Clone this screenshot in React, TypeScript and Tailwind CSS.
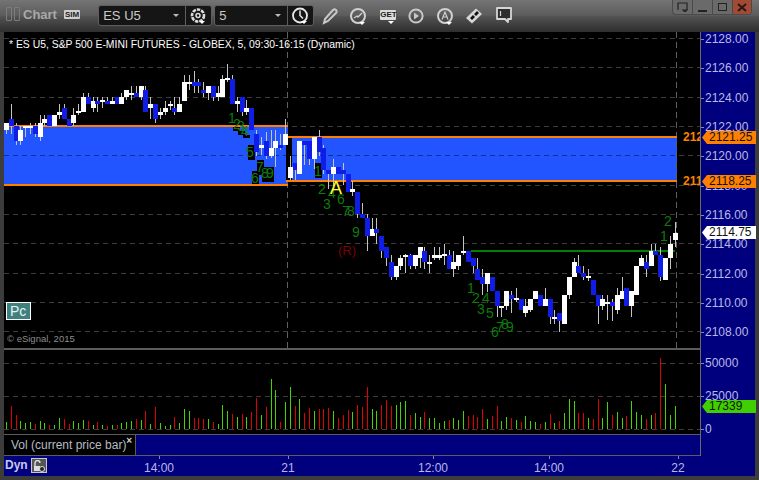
import React from 'react';

// [bodyTop, bodyBottom, wickTop, wickBottom, up]
type Candle = [number, number, number, number, number];

const candles: Candle[] = [
  [123, 130, 123, 134, 1], [119, 126, 104, 134, 0], [126, 141, 123, 145, 0], [130, 141, 126, 145, 1],
  [126, 128, 126, 137, 1], [126, 128, 123, 134, 1], [126, 134, 123, 137, 0], [123, 137, 115, 141, 1],
  [119, 123, 115, 126, 1], [115, 126, 115, 126, 0], [115, 126, 115, 126, 1], [112, 115, 104, 119, 1],
  [108, 119, 104, 119, 0], [119, 126, 119, 126, 0], [115, 123, 108, 126, 1], [111, 113, 104, 115, 1],
  [97, 112, 93, 112, 1], [97, 104, 93, 104, 0], [101, 108, 97, 112, 1], [101, 104, 97, 112, 0],
  [100, 102, 97, 108, 1], [101, 104, 97, 104, 0], [101, 104, 97, 104, 1], [97, 104, 97, 104, 0],
  [97, 104, 93, 104, 1], [90, 97, 90, 100, 1], [93, 95, 86, 100, 1], [93, 97, 86, 97, 0],
  [86, 97, 86, 100, 1], [90, 112, 86, 112, 0], [104, 108, 97, 119, 1], [104, 119, 104, 123, 0],
  [112, 115, 108, 119, 1], [108, 112, 101, 115, 1], [104, 106, 101, 110, 1], [108, 112, 97, 115, 0],
  [104, 112, 97, 112, 1], [82, 101, 75, 101, 1], [82, 84, 75, 90, 1], [82, 86, 71, 93, 0],
  [82, 86, 79, 93, 0], [90, 93, 82, 97, 0], [86, 93, 86, 100, 1], [86, 97, 86, 101, 0],
  [93, 97, 86, 101, 1], [79, 97, 75, 97, 1], [78, 80, 64, 82, 1], [79, 104, 75, 104, 0],
  [101, 104, 97, 112, 1], [97, 112, 97, 116, 0], [108, 112, 100, 115, 1], [108, 130, 108, 130, 0],
  [134, 152, 130, 156, 0], [145, 148, 137, 155, 1], [141, 156, 132, 159, 0], [148, 156, 130, 158, 1],
  [141, 148, 130, 167, 1], [145, 148, 134, 150, 0], [134, 145, 119, 145, 1], [167, 178, 156, 180, 1],
  [163, 170, 163, 180, 0], [141, 174, 141, 174, 1], [141, 145, 141, 165, 0], [141, 159, 141, 165, 0],
  [137, 159, 137, 169, 1], [137, 152, 130, 156, 0], [148, 170, 145, 174, 0], [170, 174, 170, 189, 0],
  [167, 174, 159, 186, 1], [167, 174, 167, 174, 0], [170, 174, 163, 185, 0], [174, 192, 174, 192, 0],
  [189, 192, 181, 196, 1], [192, 214, 192, 218, 0], [214, 218, 203, 218, 0], [218, 236, 214, 251, 0],
  [229, 236, 218, 236, 1], [229, 233, 218, 244, 0], [236, 251, 236, 258, 0], [247, 258, 247, 266, 0],
  [262, 277, 255, 280, 0], [266, 277, 266, 280, 1], [258, 266, 255, 270, 1], [255, 257, 254, 273, 1],
  [255, 266, 254, 269, 0], [255, 266, 255, 269, 1], [247, 258, 247, 268, 1], [251, 262, 247, 269, 0],
  [262, 264, 255, 273, 1], [255, 258, 247, 260, 1], [255, 258, 247, 260, 1], [254, 256, 244, 265, 1],
  [255, 269, 250, 269, 0], [262, 269, 251, 277, 1], [255, 266, 255, 270, 1], [251, 253, 236, 255, 1],
  [251, 262, 251, 262, 0], [258, 266, 258, 273, 0], [269, 280, 258, 280, 0], [277, 284, 269, 295, 0],
  [273, 284, 273, 292, 1], [277, 291, 277, 291, 0], [291, 306, 291, 317, 0], [306, 308, 306, 317, 1],
  [291, 306, 291, 310, 1], [295, 299, 291, 313, 0], [298, 300, 288, 302, 1], [299, 310, 299, 310, 0],
  [306, 313, 299, 317, 1], [299, 310, 299, 312, 1], [291, 299, 291, 299, 1], [295, 306, 295, 306, 0],
  [299, 306, 288, 306, 1], [299, 317, 299, 324, 0], [317, 319, 310, 324, 1], [313, 321, 313, 332, 0],
  [295, 324, 295, 324, 1], [277, 295, 277, 299, 1], [262, 277, 258, 277, 1], [266, 273, 255, 273, 0],
  [273, 277, 266, 280, 0], [276, 278, 269, 281, 1], [280, 295, 280, 295, 0], [295, 306, 295, 324, 0],
  [299, 306, 295, 310, 1], [302, 304, 295, 320, 1], [302, 306, 299, 321, 0], [295, 310, 288, 314, 1],
  [291, 299, 277, 299, 1], [288, 306, 288, 306, 0], [291, 306, 291, 317, 1], [266, 295, 266, 295, 1],
  [258, 266, 255, 266, 1], [262, 269, 255, 277, 0], [251, 266, 244, 266, 1], [251, 255, 244, 255, 0],
  [255, 277, 247, 281, 0], [258, 280, 258, 280, 1], [244, 258, 236, 269, 1], [233, 240, 222, 247, 1],
];

// bar height in px, r = down bar
const vols: [number, number][] = [
  [7, 0], [23, 1], [14, 1], [8, 0], [6, 0], [7, 0], [5, 1], [8, 0], [6, 0], [4, 1],
  [4, 0], [11, 0], [10, 1], [5, 1], [8, 0], [6, 0], [9, 0], [8, 1], [4, 0], [7, 1],
  [4, 0], [3, 1], [4, 0], [4, 1], [6, 0], [7, 0], [8, 0], [10, 1], [9, 0], [18, 1],
  [5, 0], [22, 1], [6, 0], [3, 0], [4, 0], [12, 1], [6, 0], [20, 0], [18, 0], [11, 1],
  [11, 1], [10, 1], [10, 0], [7, 1], [5, 0], [24, 0], [18, 0], [15, 1], [12, 0], [15, 1],
  [12, 0], [17, 1], [31, 1], [14, 0], [22, 1], [50, 0], [39, 0], [7, 1], [27, 0], [42, 0],
  [23, 1], [30, 0], [16, 1], [21, 1], [18, 0], [20, 1], [20, 1], [21, 1], [18, 0], [11, 1],
  [14, 1], [19, 1], [17, 0], [24, 1], [22, 1], [42, 1], [20, 0], [18, 0], [24, 1], [29, 1],
  [23, 1], [24, 0], [27, 0], [28, 0], [14, 1], [16, 0], [12, 0], [17, 1], [11, 0], [11, 0],
  [6, 0], [8, 0], [9, 1], [11, 0], [9, 0], [18, 0], [13, 1], [14, 1], [12, 1], [20, 1],
  [10, 0], [13, 1], [23, 1], [8, 0], [12, 0], [11, 1], [9, 0], [7, 1], [13, 0], [8, 0],
  [7, 0], [5, 1], [7, 0], [15, 1], [6, 0], [8, 1], [16, 0], [30, 0], [28, 0], [16, 1],
  [16, 1], [11, 0], [10, 1], [30, 1], [11, 0], [27, 0], [14, 1], [17, 0], [11, 0], [13, 1],
  [28, 0], [17, 0], [14, 0], [10, 1], [14, 0], [16, 1], [71, 1], [45, 0], [14, 0], [23, 0],
];

const priceGrid = [38, 67, 97, 126, 155, 185, 214, 243, 273, 302, 331];

const priceLabels: [string, number][] = [
  ['2128.00', 38], ['2126.00', 67], ['2124.00', 97], ['2122.00', 126], ['2120.00', 155], ['2118.00', 185],
  ['2116.00', 214], ['2114.00', 243], ['2112.00', 273], ['2110.00', 302], ['2108.00', 331],
];

const counts: [string, number, number][] = [
  ['1', 232, 123], ['2', 237, 129], ['3', 241, 131], ['4', 245, 136], ['5', 250, 157], ['6', 255, 183],
  ['7', 260, 172], ['8', 265, 178], ['9', 270, 178], ['1', 318, 176], ['2', 322, 194], ['3', 327, 209],
  ['4', 332, 198], ['6', 341, 204], ['7', 346, 216], ['8', 351, 216], ['9', 356, 237], ['1', 471, 293],
  ['2', 476, 303], ['4', 486, 303], ['3', 481, 314], ['5', 490, 318], ['6', 495, 337], ['7', 500, 332],
  ['8', 505, 329], ['9', 510, 332], ['1', 664, 241], ['2', 668, 226],
];

const xLabels: [string, number][] = [['14:00', 159], ['21', 288], ['12:00', 433], ['14:00', 549], ['22', 678]];

const cx = (i: number) => Math.round(6 + 4.81 * i);

function PriceTag({ text, top, bg }: { text: string; top: string; bg: string }) {
  return (
    <div className={`absolute left-px flex items-center ${top}`}>
      <svg width="5" height="13" viewBox="0 0 5 13">
        <path d="M0 6.5 5 0v13z" fill={bg} />
      </svg>
      <div className="h-[13px] w-[49px] pl-[2px] text-[12px] leading-[13px] text-[#101010]" style={{ background: bg }}>
        {text}
      </div>
    </div>
  );
}

function Caret({ x, y }: { x: number; y: number }) {
  return <path d={`M${x} ${y}h6l-3 3z`} fill="#fff" />;
}

function Toolbar() {
  return (
    <div className="relative flex h-8 shrink-0 items-start bg-[linear-gradient(#747474,#5c5c5c_48%,#525252_52%,#2e2e2e)] pl-[6px] pt-[5px]">
      <div className="mt-[2px] flex gap-[2px]">
        <div className="h-[14px] w-[6px] rounded-[1px] border border-[#7c7c7c]" />
        <div className="h-[14px] w-[6px] rounded-[1px] border border-[#7c7c7c]" />
      </div>
      <span className="ml-[3px] mt-[1px] text-[13px] font-bold leading-[17px] text-[#a8a8a8]">Chart</span>
      <span className="ml-[7px] mt-[5px] h-[9px] rounded-[1px] bg-[#cfcfcf] px-[1px] text-[8px] font-bold leading-[9px] text-[#222]">SIM</span>

      <div className="ml-[18px] flex h-[21px] w-[114px] rounded-[3px] border border-[#5e5e5e] bg-[#151515]">
        <div className="flex w-[87px] items-center justify-between border-r border-[#5e5e5e] pl-[4px] pr-[6px] text-[13px] text-[#c9c9c9]">
          <span>ES U5</span>
          <svg width="6" height="3"><path d="M0 0h6L3 3z" fill="#bbb" /></svg>
        </div>
        <svg width="25" height="19" viewBox="0 0 25 19" className="shrink-0">
          <circle cx="12" cy="9.5" r="6" fill="none" stroke="#dcdcdc" strokeWidth="2.6" strokeDasharray="3.4 1" />
          <circle cx="12" cy="9.5" r="2" fill="none" stroke="#dcdcdc" strokeWidth="1.5" />
          <Caret x={13} y={15} />
        </svg>
      </div>
      <div className="ml-[2px] flex h-[21px] w-[100px] rounded-[3px] border border-[#5e5e5e] bg-[#151515]">
        <div className="flex w-[73px] items-center justify-between border-r border-[#5e5e5e] pl-[4px] pr-[6px] text-[13px] text-[#c9c9c9]">
          <span>5</span>
          <svg width="6" height="3"><path d="M0 0h6L3 3z" fill="#bbb" /></svg>
        </div>
        <svg width="25" height="19" viewBox="0 0 25 19" className="shrink-0">
          <circle cx="12" cy="9.5" r="7" fill="none" stroke="#e8e8e8" strokeWidth="1.8" />
          <path d="M12 4.5v5l3 3" fill="none" stroke="#e8e8e8" strokeWidth="1.5" />
          <Caret x={13} y={15} />
        </svg>
      </div>

      <svg width="16" height="18" viewBox="0 0 16 18" className="ml-[8px] mt-[2px] shrink-0">
        <path d="M2 16l1-4 8-9a2 2 0 0 1 3 3l-8 8z" fill="none" stroke="#c8c8c8" strokeWidth="2" />
      </svg>
      <svg width="20" height="20" viewBox="0 0 20 20" className="ml-[11px] mt-[2px] shrink-0">
        <circle cx="9" cy="9" r="7" fill="none" stroke="#d0d0d0" strokeWidth="2" />
        <path d="M5 11l3-2 1 1 4-4" fill="none" stroke="#d0d0d0" strokeWidth="1.3" />
        <Caret x={10} y={15} />
      </svg>
      <div className="relative ml-[11px] mt-[5px] h-[10px] w-[16px] shrink-0 rounded-[1px] bg-[#dcdcdc] text-center text-[8px] font-bold leading-[10px] text-[#222]">
        GET
        <svg width="6" height="3" className="absolute left-[8px] top-[11px]"><path d="M0 0h6L3 3z" fill="#fff" /></svg>
      </div>
      <svg width="18" height="18" viewBox="0 0 18 18" className="ml-[11px] mt-[2px] shrink-0">
        <circle cx="9" cy="9" r="6.6" fill="none" stroke="#c8c8c8" strokeWidth="2" />
        <path d="M7 5.5 12 9l-5 3.5z" fill="#c8c8c8" />
      </svg>
      <svg width="20" height="20" viewBox="0 0 20 20" className="ml-[11px] mt-[2px] shrink-0">
        <circle cx="9" cy="9" r="7" fill="none" stroke="#d0d0d0" strokeWidth="2" />
        <path d="M6 12.5 9 5l3 7.5M7 10h4" fill="none" stroke="#d0d0d0" strokeWidth="1.2" />
        <Caret x={10} y={15} />
      </svg>
      <svg width="18" height="18" viewBox="0 0 18 18" className="ml-[9px] mt-[2px] shrink-0">
        <path d="M1 11 11 1.5l6 5.5L7 16.5z" fill="#d8d8d8" />
        <path d="M5 11l3-3 2 2-3 3zM9 7l3-3 2 2-3 3z" fill="#111" />
      </svg>
      <svg width="18" height="18" viewBox="0 0 18 18" className="ml-[12px] mt-[1px] shrink-0">
        <path d="M2 2h14v11h-3v3l-3-3H2z" fill="#2e2e2e" stroke="#d6d6d6" strokeWidth="1.8" strokeLinejoin="round" />
        <path d="M5.5 5v5" stroke="#d6d6d6" strokeWidth="1.2" />
      </svg>

      {/* window buttons */}
      <div className="absolute right-[7px] top-0 flex h-[15px] w-[80px] overflow-hidden rounded-b-[4px] border border-t-0 border-[#4a4a4a] bg-[#6a6a6a]">
        <div className="flex w-[20px] items-center justify-center border-r border-[#4a4a4a]">
          <svg width="11" height="10"><path d="M1 8V1h9v7M6 8h4l-2 2z" fill="none" stroke="#222" strokeWidth="1.2" /></svg>
        </div>
        <div className="flex w-[20px] items-end justify-center border-r border-[#4a4a4a] pb-[2px]">
          <div className="h-[2px] w-[9px] bg-[#222]" />
        </div>
        <div className="flex w-[20px] items-center justify-center border-r border-[#4a4a4a]">
          <div className="h-[8px] w-[9px] border border-[#222]" />
        </div>
        <div className="flex flex-1 items-center justify-center bg-[#a34a34]">
          <svg width="10" height="9"><path d="M1 1l8 7M9 1 1 8" stroke="#2a1810" strokeWidth="2" /></svg>
        </div>
      </div>
    </div>
  );
}

function PricePanel() {
  return (
    <div className="flex h-[316px] shrink-0">
      <div className="relative w-[696px] bg-black">
        <svg width="696" height="316" viewBox="4 32 696 316" className="block" shapeRendering="crispEdges">
          <rect x="4" y="127" width="284" height="57" fill="#2255ff" />
          <rect x="288" y="138" width="389" height="42" fill="#2255ff" />
          {priceGrid.map(y => (
            <line key={y} x1="4" x2="700" y1={y + 0.5} y2={y + 0.5} stroke="#3c3c3c" strokeDasharray="5 4" />
          ))}
          <line x1="4" x2="677" y1="155.5" y2="155.5" stroke="#10308a" strokeDasharray="5 4" />
          <line x1="287.5" x2="287.5" y1="32" y2="348" stroke="#606060" strokeDasharray="6 4" />
          <line x1="676.5" x2="676.5" y1="32" y2="348" stroke="#606060" strokeDasharray="6 4" />
          <rect x="4" y="125" width="284" height="2" fill="#ff8000" />
          <rect x="4" y="184" width="284" height="2" fill="#ff8000" />
          <rect x="286" y="136" width="391" height="2" fill="#ff8000" />
          <rect x="286" y="180" width="391" height="2" fill="#ff8000" />
          <rect x="471" y="250" width="204" height="2" fill="#008000" />

          {/* black backing behind the count numbers */}
          <rect x="233" y="127" width="7" height="4" fill="#000" />
          <rect x="238" y="131" width="7" height="4" fill="#000" />
          <rect x="243" y="135" width="7" height="3" fill="#000" />
          <rect x="248" y="145" width="7" height="15" fill="#000" />
          <rect x="252" y="171" width="7" height="13" fill="#000" />
          <rect x="257" y="160" width="7" height="15" fill="#000" />
          <rect x="262" y="167" width="12" height="15" fill="#000" />
          <rect x="315" y="163" width="7" height="15" fill="#000" />
          <rect x="286" y="138" width="6" height="42" fill="#000" />

          {candles.map((c, i) => {
            const x = cx(i);
            return (
              <g key={i}>
                <rect x={x} y={c[2]} width="1" height={c[3] - c[2]} fill="#c4c4c4" />
                <rect x={x - 2} y={c[0]} width="5" height={c[1] - c[0]} fill={c[4] ? '#ffffff' : '#0f1de6'} />
              </g>
            );
          })}
          <g shapeRendering="auto" fontFamily="'Liberation Sans', sans-serif">
            {counts.map(([t, x, y], i) => (
              <text key={i} x={x} y={y} textAnchor="middle" fontSize="14" fill="#0c7c0c">{t}</text>
            ))}
            <text x="336" y="194" textAnchor="middle" fontSize="18" fill="#ffff33">A</text>
            <text x="347" y="255" textAnchor="middle" fontSize="13" fill="#7c0000">(R)</text>
            <text x="683" y="141" fontSize="12" fontWeight="bold" fill="#ff8000">212</text>
            <text x="683" y="185" fontSize="12" fontWeight="bold" fill="#ff8000">211</text>
          </g>
        </svg>
        <div className="absolute left-[5px] top-[6px] text-[10.4px] leading-[13px] whitespace-nowrap text-white">
          * ES U5, S&amp;P 500 E-MINI FUTURES - GLOBEX, 5, 09:30-16:15 (Dynamic)
        </div>
        <div className="absolute left-[2px] top-[270px] h-[18px] w-[25px] border border-white bg-[#3f8080] pl-[3px] text-[14px] leading-[16px] text-[#e8f4f4]">Pc</div>
        <div className="absolute left-[3px] top-[301px] text-[9.5px] leading-[12px] text-[#8c8c8c]">© eSignal, 2015</div>
      </div>
      <div className="relative flex-1 border-l border-[#6a6a6a] bg-[#00007f]">
        {priceLabels.map(([t, y]) => (
          <div key={t} className="absolute left-0 flex h-[14px] items-center text-[12px] text-[#b9b9e6]" style={{ top: y - 32 - 6 }}>
            <span className="h-px w-[3px] bg-[#8a8a8a]" />
            <span className="ml-px">{t}</span>
          </div>
        ))}
        <PriceTag text="2121.25" top="top-[99px]" bg="#ff8000" />
        <PriceTag text="2118.25" top="top-[143px]" bg="#ff8000" />
        <PriceTag text="2114.75" top="top-[194px]" bg="#ffffff" />
      </div>
    </div>
  );
}

function VolumePanel() {
  return (
    <div className="flex h-[108px] shrink-0">
      <div className="flex w-[696px] flex-col">
        <div className="h-[87px] border-t-2 border-b border-t-[#5c5c5c] border-b-[#5c5c5c] bg-black">
          <svg width="696" height="84" viewBox="4 350 696 84" className="block" shapeRendering="crispEdges">
            {[363, 396, 429].map(y => (
              <line key={y} x1="4" x2="700" y1={y + 0.5} y2={y + 0.5} stroke="#3c3c3c" strokeDasharray="5 4" />
            ))}
            {vols.map(([h, r], i) => (
              <rect key={i} x={cx(i)} y={429 - h} width="1" height={h} fill={r ? '#e00000' : '#44d400'} />
            ))}
          </svg>
        </div>
        <div className="flex h-[21px] border-b border-[#5c5c5c] bg-[#00007f]">
          <div className="relative w-[132px] border-r border-[#5c5c5c] bg-black pl-[7px] text-[12px] leading-[20px] text-[#b4bcc4]">
            Vol (current price bar)
            <span className="absolute right-[3px] top-0 text-[10px] font-bold leading-[12px] text-[#d0d0d0]">×</span>
          </div>
        </div>
      </div>
      <div className="relative flex-1 border-l border-[#6a6a6a] bg-[#00007f]">
        {[['50000', 15], ['25000', 48], ['0', 81]].map(([t, y]) => (
          <div key={t} className="absolute left-0 flex h-[14px] items-center text-[12px] text-[#b9b9e6]" style={{ top: Number(y) - 7 }}>
            <span className="h-px w-[3px] bg-[#8a8a8a]" />
            <span className="ml-px">{t}</span>
          </div>
        ))}
        <PriceTag text="17339" top="top-[52px]" bg="#40d000" />
      </div>
    </div>
  );
}

function TimeAxis() {
  return (
    <div className="relative flex h-[20px] shrink-0 items-start bg-[#00007f] pl-px pt-[1px]">
      <span className="text-[12px] font-bold leading-[17px] text-[#c8c8e8]">Dyn</span>
      <div className="ml-[3px] mt-px flex h-[15px] w-[16px] items-center justify-center border border-[#c8c8c8] bg-[#555]">
        <svg width="12" height="12" viewBox="0 0 12 12">
          <path d="M2 6V3a2.5 2.5 0 0 1 5 0" fill="none" stroke="#ddd" strokeWidth="1.4" />
          <rect x="1" y="6" width="6" height="5" fill="#ddd" />
          <circle cx="9" cy="9" r="2.5" fill="#222" stroke="#ddd" />
        </svg>
      </div>
      {xLabels.map(([t, x]) => (
        <div key={x} className="absolute top-0 flex w-[40px] flex-col items-center" style={{ left: x - 4 - 20 }}>
          <span className="h-[3px] w-px bg-[#8a8a8a]" />
          <span className="mt-[2px] text-[12px] leading-[15px] text-[#b9b9e6]">{t}</span>
        </div>
      ))}
    </div>
  );
}

export default function App() {
  return (
    <div className="h-[480px] w-[759px] overflow-hidden bg-[#3c3c3c] font-['Liberation_Sans',sans-serif]">
      <Toolbar />
      <div className="pl-[4px] pr-[4px]">
        <PricePanel />
        <VolumePanel />
        <TimeAxis />
      </div>
    </div>
  );
}
